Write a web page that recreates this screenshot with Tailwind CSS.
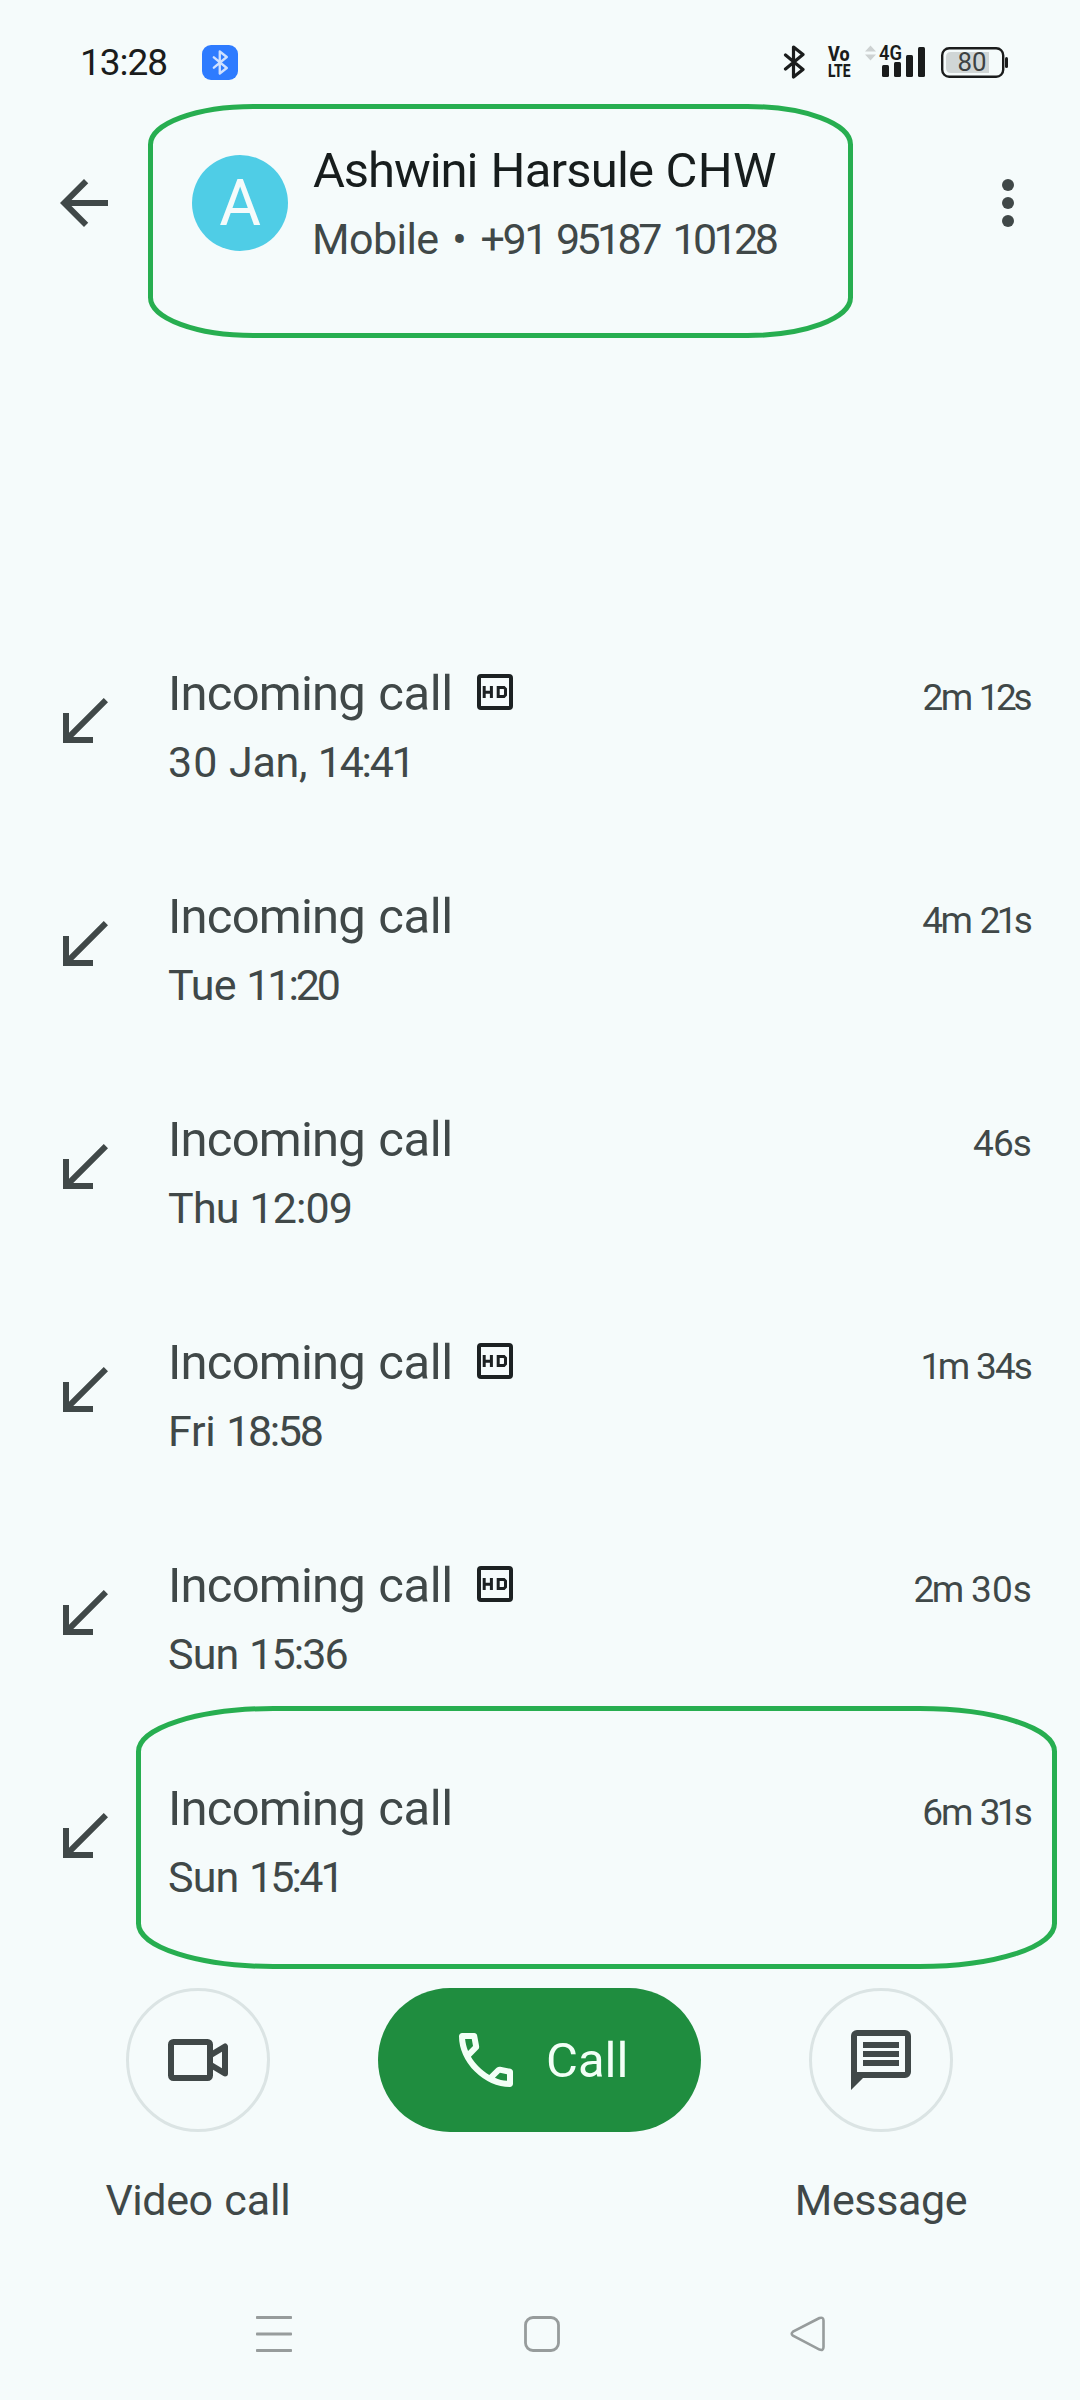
<!DOCTYPE html>
<html lang="en">
<head>
<meta charset="utf-8">
<title>Call history</title>
<script src="https://cdn.jsdelivr.net/npm/@tailwindcss/browser@4"></script>
</head>
<body class="bg-[#f5fbfb]">
<svg class="hidden">
  <symbol id="incoming" viewBox="0 0 24 24"><path fill="currentColor" d="M20 5.41 18.59 4 7 15.59V9H5v10h10v-2H8.41z"/></symbol>
  <symbol id="hd" viewBox="0 0 48 48"><g fill="none" stroke="currentColor"><rect x="8" y="8" width="32" height="32" rx="2" stroke-width="4"/><path stroke-width="3" d="M13.2 18v12M20.4 18v12M13 24.3h7M27.2 19.5h5.8l1.5 1.5v6l-1.5 1.5h-5.8z"/></g></symbol>
  <symbol id="bt" viewBox="0 0 22 34"><path fill="none" stroke="currentColor" stroke-width="3.2" stroke-linejoin="round" stroke-linecap="round" d="M2 10 19.5 24.5 10 32V2l9.5 7.5L2 24"/></symbol>
</svg>

<div class="relative flex h-[2400px] w-[1080px] flex-col overflow-hidden whitespace-nowrap bg-[#f5fbfb] font-['Roboto',sans-serif] text-[#404848]">

  <!-- Status bar -->
  <div class="flex h-[104px] items-start text-[#1a1c1c]">
    <div class="ml-[80px] mt-[38px] w-[122px] text-[37px] leading-[50px] tracking-[-1px]">13:28</div>
    <div class="mt-[45px] flex h-[35px] w-[36px] items-center justify-center rounded-[9px] bg-[#2e7bff] text-[#cfe0ff]">
      <svg class="h-[25px] w-[17px]"><use href="#bt"/></svg>
    </div>
    <svg class="ml-[545px] mt-[45px] h-[34px] w-[23px]"><use href="#bt"/></svg>
    <svg class="ml-[20px] mt-[36px] h-[52px] w-[184px]" viewBox="826 36 184 52" font-family="Roboto">
      <g fill="#1a1c1c" font-weight="700">
        <text x="828" y="60.500" font-size="19.500" font-weight="800" textLength="21.500" lengthAdjust="spacingAndGlyphs">Vo</text>
        <text x="828" y="76.500" font-size="19" font-weight="800" textLength="22.500" lengthAdjust="spacingAndGlyphs">LTE</text>
        <text x="879" y="60" font-size="21" font-weight="600" textLength="23" lengthAdjust="spacingAndGlyphs">4G</text>
        <rect x="882" y="65" width="7" height="12" rx="1.500"/><rect x="894" y="62" width="7" height="15" rx="1.500"/>
        <rect x="906" y="55" width="7" height="22" rx="1.500"/><rect x="918" y="47" width="7" height="30" rx="1.500"/>
        <rect x="1005" y="57" width="3" height="11" rx="1.500"/>
      </g>
      <path fill="#cdd2d2" d="M865 51.500 870.500 45.500 876 51.500zM865 54.500h11l-5.500 6z"/>
      <path fill="#d0d6d6" d="M951 52h38v21h-38q-5 0-5-5V57q0-5 5-5z"/>
      <rect x="942.200" y="48.200" width="61" height="28.600" rx="7" fill="none" stroke="#1a1c1c" stroke-width="2.400"/>
      <text x="957.500" y="71" font-size="25" fill="#3d4242" textLength="29" lengthAdjust="spacingAndGlyphs">80</text>
    </svg>
  </div>

  <!-- Contact header -->
  <div class="flex h-[536px] items-start">
    <svg class="ml-[48px] mt-[63px] size-[72px]" viewBox="0 0 24 24"><path fill="currentColor" d="M20 11H7.830l5.590-5.590L12 4l-8 8 8 8 1.410-1.410L7.830 13H20z"/></svg>
    <div class="ml-[72px] mt-[51px] flex size-[96px] items-center justify-center rounded-full bg-[#4fcde6] pt-[2px] text-[64px] leading-none text-[#f5fbfb]">A</div>
    <div class="ml-[23px] mt-[37px] w-[661px]">
      <div class="ml-[2px] text-[49px] leading-[60px] text-[#171d1d]"><span class="tracking-[-1.09px]">Ashwini</span><span class="ml-[1px]"> </span><span class="tracking-[-0.8px]">Harsule</span> <span class="tracking-[0.3px]">CHW</span></div>
      <div class="mt-[13px] text-[43px] leading-[50px]"><span class="ml-[1px] tracking-[-0.55px]">Mobile</span> <span class="ml-[3px]">•</span> <span class="ml-[3px] tracking-[-2.34px]">+91</span> <span class="ml-[-1px] tracking-[-3.6px]">95187</span> <span class="ml-[3px] tracking-[-3.6px]">10128</span></div>
    </div>
    <svg class="mt-[63px] size-[72px]" viewBox="0 0 24 24" fill="currentColor"><circle cx="12" cy="6" r="2"/><circle cx="12" cy="12" r="2"/><circle cx="12" cy="18" r="2"/></svg>
  </div>

  <!-- Call log -->
  <div class="flex flex-col">
    <div class="flex h-[223px] items-start">
      <svg class="ml-[48px] mt-[46px] size-[72px]"><use href="#incoming"/></svg>
      <div class="ml-[48px] mt-[24px] grow">
        <div class="flex text-[49px] leading-[60px]"><div><span class="tracking-[-0.8px]">Incoming</span> <span class="ml-[1px] tracking-[-0.37px]">call</span></div><svg class="ml-[18px] mt-[4px] size-[48px] text-[#1c2122]"><use href="#hd"/></svg></div>
        <div class="mt-[13px] text-[43px] leading-[50px]"><span class="tracking-[1px]">30</span> <span class="tracking-[-0.3px]">Jan,</span> <span class="tracking-[-2.3px]">14:41</span></div>
      </div>
      <div class="mr-[51px] mt-[33px] text-[37px] leading-[50px]"><span class="tracking-[-2.5px]">2m</span> <span class="ml-[-1px] tracking-[-3.5px]">12s</span></div>
    </div>
    <div class="flex h-[223px] items-start">
      <svg class="ml-[48px] mt-[46px] size-[72px]"><use href="#incoming"/></svg>
      <div class="ml-[48px] mt-[24px] grow">
        <div class="text-[49px] leading-[60px]"><span class="tracking-[-0.8px]">Incoming</span> <span class="ml-[1px] tracking-[-0.37px]">call</span></div>
        <div class="mt-[13px] text-[43px] leading-[50px]"><span class="tracking-[-0.85px]">Tue</span> <span class="tracking-[-3.1px]">11:20</span></div>
      </div>
      <div class="mr-[51px] mt-[33px] text-[37px] leading-[50px]"><span class="tracking-[-2.5px]">4m</span> <span class="tracking-[-3.8px]">21s</span></div>
    </div>
    <div class="flex h-[223px] items-start">
      <svg class="ml-[48px] mt-[46px] size-[72px]"><use href="#incoming"/></svg>
      <div class="ml-[48px] mt-[24px] grow">
        <div class="text-[49px] leading-[60px]"><span class="tracking-[-0.8px]">Incoming</span> <span class="ml-[1px] tracking-[-0.37px]">call</span></div>
        <div class="mt-[13px] text-[43px] leading-[50px]"><span class="tracking-[-0.75px]">Thu</span> <span class="tracking-[-0.9px]">12:09</span></div>
      </div>
      <div class="mr-[49px] mt-[33px] text-[37px] leading-[50px] tracking-[-0.93px]">46s</div>
    </div>
    <div class="flex h-[223px] items-start">
      <svg class="ml-[48px] mt-[46px] size-[72px]"><use href="#incoming"/></svg>
      <div class="ml-[48px] mt-[24px] grow">
        <div class="flex text-[49px] leading-[60px]"><div><span class="tracking-[-0.8px]">Incoming</span> <span class="ml-[1px] tracking-[-0.37px]">call</span></div><svg class="ml-[18px] mt-[4px] size-[48px] text-[#1c2122]"><use href="#hd"/></svg></div>
        <div class="mt-[13px] text-[43px] leading-[50px]"><span class="tracking-[-0.25px]">Fri</span> <span class="tracking-[-2.36px]">18:58</span></div>
      </div>
      <div class="mr-[49px] mt-[33px] text-[37px] leading-[50px]"><span class="tracking-[-3.5px]">1m</span> <span class="tracking-[-1.9px]">34s</span></div>
    </div>
    <div class="flex h-[223px] items-start">
      <svg class="ml-[48px] mt-[46px] size-[72px]"><use href="#incoming"/></svg>
      <div class="ml-[48px] mt-[24px] grow">
        <div class="flex text-[49px] leading-[60px]"><div><span class="tracking-[-0.8px]">Incoming</span> <span class="ml-[1px] tracking-[-0.37px]">call</span></div><svg class="ml-[18px] mt-[4px] size-[48px] text-[#1c2122]"><use href="#hd"/></svg></div>
        <div class="mt-[13px] text-[43px] leading-[50px]"><span class="tracking-[-0.86px]">Sun</span> <span class="tracking-[-1.86px]">15:36</span></div>
      </div>
      <div class="mr-[48px] mt-[33px] text-[37px] leading-[50px]"><span class="tracking-[-2.5px]">2m</span> <span class="tracking-[0.1px]">30s</span></div>
    </div>
    <div class="flex h-[233px] items-start">
      <svg class="ml-[48px] mt-[46px] size-[72px]"><use href="#incoming"/></svg>
      <div class="ml-[48px] mt-[24px] grow">
        <div class="text-[49px] leading-[60px]"><span class="tracking-[-0.8px]">Incoming</span> <span class="ml-[1px] tracking-[-0.37px]">call</span></div>
        <div class="mt-[13px] text-[43px] leading-[50px]"><span class="tracking-[-0.86px]">Sun</span> <span class="tracking-[-2.9px]">15:41</span></div>
      </div>
      <div class="mr-[51px] mt-[33px] text-[37px] leading-[50px]"><span class="tracking-[-2px]">6m</span> <span class="ml-[-1px] tracking-[-3.8px]">31s</span></div>
    </div>
  </div>

  <!-- Actions -->
  <div class="flex h-[328px] items-start gap-[80px] pl-[98px]">
    <div class="flex w-[200px] flex-col items-center">
      <div class="flex size-[144px] items-center justify-center rounded-full border-[3px] border-[#dbe4e4]">
        <svg class="size-[72px]" viewBox="0 0 24 24" fill="none" stroke="currentColor" stroke-width="2" stroke-linejoin="round"><rect x="3" y="6" width="13" height="12" rx=".8"/><path d="M16 10.500 21 7.500v9l-5-3"/></svg>
      </div>
      <div class="mt-[43px] text-[43px] leading-[50px]"><span class="tracking-[-0.43px]">Video</span> <span class="ml-px tracking-[-0.13px]">call</span></div>
    </div>
    <div class="flex h-[144px] w-[323px] items-center rounded-full bg-[#1f8d3f] pl-[72px] text-[#f2fff6]">
      <svg class="size-[72px]" viewBox="0 -960 960 960"><path fill="currentColor" d="M798-120q-125 0-247-54.500T329-329Q229-429 174.500-551T120-798q0-18 12-30t30-12h162q14 0 25 9.500t13 22.500l26 140q2 16-1 27t-11 19l-97 98q20 37 47.500 71.500T387-386q31 31 65 57.500t72 48.500l94-94q9-9 23.500-13.500T670-390l138 28q14 4 23 14.500t9 23.500v162q0 18-12 30t-30 12ZM241-600l66-66-17-94h-89q5 41 14 81t26 79Zm358 358q39 17 79.500 27t81.500 13v-88l-94-19-67 67Z"/></svg>
      <div class="ml-[24px] mt-[2px] text-[49px] leading-[60px]">Call</div>
    </div>
    <div class="flex w-[200px] flex-col items-center">
      <div class="flex size-[144px] items-center justify-center rounded-full border-[3px] border-[#dbe4e4]">
        <svg class="size-[72px]" viewBox="0 0 24 24"><path fill="currentColor" fill-rule="evenodd" d="M4 2h16a2 2 0 0 1 2 2v12a2 2 0 0 1-2 2H6l-4 4V4a2 2 0 0 1 2-2zm0 2v12h16V4zM6 6h12v2H6zM6 9h12v2H6zM6 12h12v2H6z"/></svg>
      </div>
      <div class="mt-[43px] text-[43px] leading-[50px] tracking-[-0.35px]">Message</div>
    </div>
  </div>

  <!-- Navigation bar -->
  <div class="flex items-start text-[#979c9c]">
    <svg class="ml-[256px] size-[36px]" viewBox="0 0 36 36" fill="currentColor"><rect y="0" width="36" height="3" rx=".8"/><rect y="16.500" width="36" height="3" rx=".8"/><rect y="33" width="36" height="3" rx=".8"/></svg>
    <svg class="ml-[232px] size-[36px]" viewBox="0 0 36 36" fill="none" stroke="currentColor" stroke-width="2.800"><rect x="1.500" y="1.500" width="33" height="33" rx="7.500"/></svg>
    <svg class="ml-[230px] size-[36px]" viewBox="0 0 36 36" fill="none" stroke="currentColor" stroke-width="2.600"><path d="M29.500 2 3 15.700q-2.600 2 0 4L29.500 33.600q4 1.300 4-2.600V4.600q0-3.900-4-2.600z"/></svg>
  </div>

  <!-- Highlight outlines -->
  <svg class="pointer-events-none absolute inset-0" width="1080" height="2400" fill="none" stroke="#27ae50" stroke-width="5">
    <rect x="150.500" y="106.500" width="700" height="229" rx="103" ry="38"/>
    <rect x="138.500" y="1708.500" width="916" height="258" rx="135" ry="43"/>
  </svg>
</div>
</body>
</html>
